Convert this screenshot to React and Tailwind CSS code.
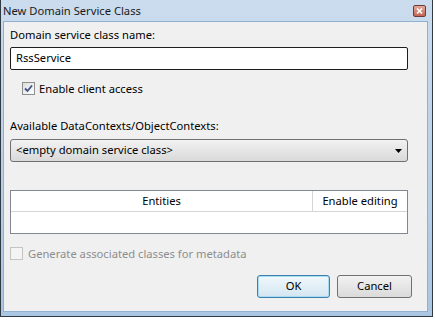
import React from "react";

const font = { fontFamily: '"Noto Sans", "Open Sans", Arial, sans-serif' };

function CheckBox({ checked, disabled }) {
  return (
    <div
      className={
        "w-[13px] h-[13px] border flex items-center justify-center " +
        (disabled
          ? "border-[#c4c4c4] bg-[#f4f4f4]"
          : "border-[#8e8f8f] bg-gradient-to-br from-[#dcdcdc] to-[#ffffff]")
      }
    >
      {checked && (
        <svg width="9" height="9" viewBox="0 0 9 9">
          <path d="M1 4.5 L3.5 7 L8 1.5" fill="none" stroke="#3d5289" strokeWidth="1.8" />
        </svg>
      )}
    </div>
  );
}

export default function App() {
  return (
    <div className="w-[435px] h-[322px] bg-white text-[11.2px] text-black" style={font}>
      {/* window frame */}
      <div className="w-[433px] h-[317px] border-l border-r border-b border-[#2f3a42] bg-gradient-to-b from-[#cbdcee] to-[#aac6e2] flex flex-col">
        {/* title bar */}
        <div className="h-[21px] flex items-center pl-[2px] pr-[6px]">
          <span className="leading-[15px] text-[#1a1a1a]">New Domain Service Class</span>
          <div className="ml-auto w-[13px] h-[12px] rounded-[2px] border border-[#6e3b36] bg-gradient-to-b from-[#e4a89c] to-[#c46453] flex items-center justify-center">
            <svg width="7" height="6" viewBox="0 0 7 6">
              <path d="M1 0.5 L6 5.5 M6 0.5 L1 5.5" stroke="#ffffff" strokeWidth="1.6" />
            </svg>
          </div>
        </div>

        {/* client area */}
        <div className="flex-1 ml-[2px] mr-[4px] mb-[4px] bg-[#f0f0f0] border border-[#8fb0cf] flex flex-col pl-[6px] pr-[19px]">
          <div className="mt-[5px] h-[15px] leading-[15px]">Domain service class name:</div>

          <div className="mt-[5px] h-[23px] bg-white border border-[#1e1e1e] rounded-[2px] flex items-center pl-[5px]">
            RssService
          </div>

          <div className="mt-[11px] h-[15px] flex items-center gap-[4px] pl-[12px]">
            <CheckBox checked />
            <span className="leading-[15px]">Enable client access</span>
          </div>

          <div className="mt-[22px] h-[15px] leading-[15px]">Available DataContexts/ObjectContexts:</div>

          <div className="mt-[6px] h-[23px] rounded-[3px] border border-[#707070] bg-gradient-to-b from-[#f2f2f2] to-[#d9d9d9] flex items-center pl-[5px] pr-[5px]">
            <span>&lt;empty domain service class&gt;</span>
            <svg className="ml-auto" width="7" height="4" viewBox="0 0 7 4">
              <path d="M0 0 L7 0 L3.5 4 Z" fill="#000000" />
            </svg>
          </div>

          <div className="mt-[28px] h-[44px] bg-white border border-[#828790] flex flex-col">
            <div className="h-[21px] flex border-b border-[#d5d5d5]">
              <div className="flex-1 flex items-center justify-center border-r border-[#d5d5d5]">Entities</div>
              <div className="w-[94px] flex items-center justify-center">Enable editing</div>
            </div>
          </div>

          <div className="mt-[12px] h-[15px] flex items-center gap-[5px]">
            <CheckBox disabled />
            <span className="leading-[15px] text-[#8d8d8d]">Generate associated classes for metadata</span>
          </div>

          <div className="mt-[14px] flex justify-end gap-[7px] -mr-[4px]">
            <div className="w-[73px] h-[23px] rounded-[3px] border border-[#3c7fb1] bg-gradient-to-b from-[#f0f8fc] to-[#d4e6f1] shadow-[inset_0_0_0_1px_#a9dcf0] flex items-center justify-center">
              OK
            </div>
            <div className="w-[75px] h-[23px] rounded-[3px] border border-[#707070] bg-gradient-to-b from-[#f2f2f2] to-[#dadada] flex items-center justify-center">
              Cancel
            </div>
          </div>
        </div>
      </div>
    </div>
  );
}
